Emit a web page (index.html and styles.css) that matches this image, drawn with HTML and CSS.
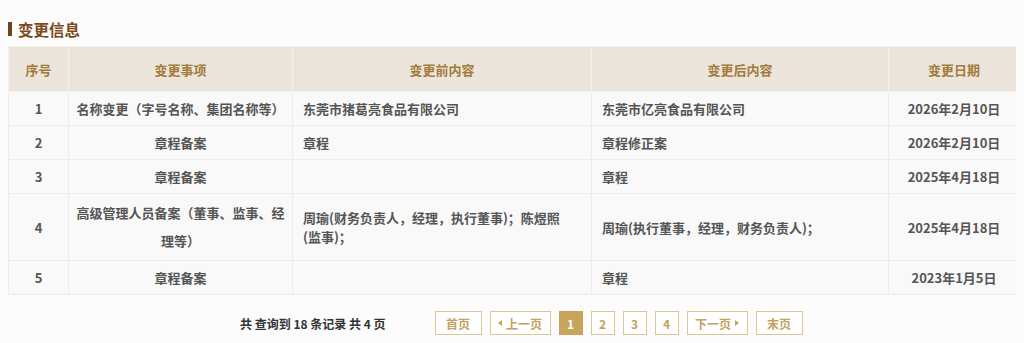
FILE: index.html
```html
<!DOCTYPE html>
<html lang="zh-CN">
<head>
<meta charset="utf-8">
<title>变更信息</title>
<link rel="stylesheet" href="styles.css">
</head>
<body>
<h2 class="title"><span class="bar"></span>变更信息</h2>
<table class="grid">
  <colgroup>
    <col class="c1"><col class="c2"><col class="c3"><col class="c4"><col class="c5">
  </colgroup>
  <thead>
    <tr><th>序号</th><th>变更事项</th><th>变更前内容</th><th>变更后内容</th><th>变更日期</th></tr>
  </thead>
  <tbody>
    <tr><td class="ctr">1</td><td class="ctr item">名称变更（字号名称、集团名称等）</td><td class="lft before">东莞市猪葛亮食品有限公司</td><td class="lft">东莞市亿亮食品有限公司</td><td class="ctr">2026年2月10日</td></tr>
    <tr><td class="ctr">2</td><td class="ctr item">章程备案</td><td class="lft before">章程</td><td class="lft">章程修正案</td><td class="ctr">2026年2月10日</td></tr>
    <tr><td class="ctr">3</td><td class="ctr item">章程备案</td><td class="lft before"></td><td class="lft">章程</td><td class="ctr">2025年4月18日</td></tr>
    <tr class="tall"><td class="ctr">4</td><td class="ctr item">高级管理人员备案（董事、监事、经理等）</td><td class="lft before">周瑜(财务负责人，经理，执行董事)；陈煜照(监事)；</td><td class="lft">周瑜(执行董事，经理，财务负责人)；</td><td class="ctr">2025年4月18日</td></tr>
    <tr><td class="ctr">5</td><td class="ctr item">章程备案</td><td class="lft before"></td><td class="lft">章程</td><td class="ctr">2023年1月5日</td></tr>
  </tbody>
</table>
<div class="pager">
  <span class="summary">共 查询到 18 条记录 共 4 页</span>
  <div class="btns">
    <a class="pb wide">首页</a>
    <a class="pb wider"><svg class="tri" width="4" height="6" viewBox="0 0 4 6"><path d="M4 0 L0 3 L4 6 Z"/></svg>上一页</a>
    <a class="pb num on">1</a>
    <a class="pb num">2</a>
    <a class="pb num">3</a>
    <a class="pb num">4</a>
    <a class="pb wider">下一页<svg class="tri r" width="4" height="6" viewBox="0 0 4 6"><path d="M0 0 L4 3 L0 6 Z"/></svg></a>
    <a class="pb wide">末页</a>
  </div>
</div>
</body>
</html>
```
FILE: styles.css
```css
html, body {
  background: #fcfcfc;
}
body {
  margin: 8px;
  font-family: "Noto Sans CJK SC", "Noto Sans", sans-serif;
  font-size: 13px;
  color: #555;
}
.title {
  margin: 9px 0 0 0;
  height: 24px;
  display: flex;
  align-items: center;
  font-size: 15.5px;
  font-weight: bold;
  color: #7a4a1d;
  line-height: 24px;
}
.bar {
  display: inline-block;
  width: 4px;
  height: 14px;
  background: #6b4420;
  margin-right: 6px;
}
.grid {
  margin-top: 5px;
  width: 1011px;
  border-collapse: collapse;
  table-layout: fixed;
}
.c1 { width: 60px; }
.c2 { width: 224px; }
.c3 { width: 299px; }
.c4 { width: 297px; }
.c5 { width: 131px; }
.grid th {
  height: 44px;
  background: #ebe5dc;
  color: #a37b3b;
  font-weight: bold;
  border: 1px solid #f4f0ea;
  padding: 0;
}
.grid td {
  height: 33px;
  background: #f9f9f9;
  border: 1px solid #ececec;
  font-weight: bold;
  color: #555;
  padding: 0 10px;
  line-height: 19px;
}
.grid td.item {
  padding: 0 5px;
}
.grid td.before {
  padding-right: 26px;
}
.grid tr.tall td {
  height: 66px;
}
.grid tr.tall td.item {
  line-height: 28px;
}
.ctr { text-align: center; }
.lft { text-align: left; }
.pager {
  margin-top: 16px;
  display: flex;
  align-items: center;
  padding-left: 232px;
}
.summary {
  font-weight: bold;
  color: #333;
  font-size: 12px;
  margin-right: 49px;
}
.btns {
  display: flex;
  gap: 8px;
}
.pb {
  box-sizing: border-box;
  height: 24px;
  border: 1px solid #dcc597;
  background: #fff;
  color: #c4a062;
  font-weight: bold;
  font-size: 12px;
  display: flex;
  align-items: center;
  justify-content: center;
  gap: 4px;
}
.pb.wide { width: 47px; }
.pb.wider { width: 61px; }
.pb.num { width: 24px; }
.pb.on {
  background: #c8a45c;
  border-color: #c8a45c;
  color: #fff;
}
.tri { fill: #c4a062; }
```
